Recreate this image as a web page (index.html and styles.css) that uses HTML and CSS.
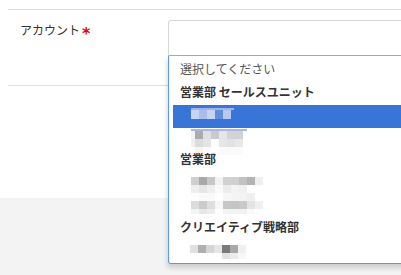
FILE: index.html
```html
<!DOCTYPE html>
<html lang="ja">
<head>
<meta charset="utf-8">
<title>アカウント</title>
<link rel="stylesheet" href="styles.css">
</head>
<body>
<div class="page">
  <div class="form">
    <div class="form-row">
      <div class="label">アカウント<span class="req">*</span></div>
      <div class="field">
        <div class="select">
          <div class="select-single"></div>
          <div class="drop">
            <ul class="results">
              <li class="opt placeholder">選択してください</li>
              <li class="opt group">営業部 セールスユニット</li>
              <li class="opt child hl">
                <div class="mosaic m-hl">
                  <div class="strip s-hl"></div>
                  <div class="cells cols5">
                    <i class="b1"></i><i class="b2"></i><i class="b1"></i><i class="b3"></i><i class="b4"></i>
                  </div>
                </div>
              </li>
              <li class="opt child">
                <div class="mosaic m-r4">
                  <div class="strip s-r4"></div>
                  <div class="cells cols-r4">
                    <i class="gf4"></i><i class="gab"></i><i class="ge0"></i><i class="gca"></i><i class="ge6"></i><i class="gd3"></i><i class="gd3"></i>
                    <i class="gf0"></i><i class="gdc"></i><i class="ge4"></i><i class="gfd"></i><i class="ge6"></i><i class="ge2"></i><i class="ge8"></i>
                    <i class="gff"></i><i class="gf5"></i><i class="gfa"></i><i class="gff"></i><i class="gfa"></i><i class="gfa"></i><i class="gfa"></i>
                  </div>
                </div>
              </li>
              <li class="opt group">営業部</li>
              <li class="opt child">
                <div class="mosaic m-r6">
                  <div class="cells cols9">
                    <i class="gcf"></i><i class="ga9"></i><i class="gc7"></i><i class="gf2"></i><i class="gd0"></i><i class="gd0"></i><i class="gc2"></i><i class="gb3"></i><i class="gef"></i>
                    <i class="gee"></i><i class="ge6"></i><i class="gef"></i><i class="gfa"></i><i class="gec"></i><i class="gf3"></i><i class="gf0"></i><i class="gff"></i><i class="gff"></i>
                    <i class="gfd"></i><i class="gfa"></i><i class="gf9"></i><i class="gff"></i><i class="gf6"></i><i class="gf4"></i><i class="gf3"></i><i class="gef"></i><i class="gff"></i>
                    <i class="gdc"></i><i class="gcb"></i><i class="gde"></i><i class="gf7"></i><i class="gc6"></i><i class="gc4"></i><i class="gc9"></i><i class="ge4"></i><i class="gf0"></i>
                    <i class="gf4 half"></i><i class="ge8 half"></i><i class="ged half"></i><i class="gff half"></i><i class="gf4 half"></i><i class="gf2 half"></i><i class="gf2 half"></i><i class="gfa half"></i><i class="gff half"></i>
                  </div>
                </div>
              </li>
              <li class="opt child"></li>
              <li class="opt group">クリエイティブ戦略部</li>
              <li class="opt child">
                <div class="mosaic m-r9">
                  <div class="cells cols7">
                    <i class="ge0"></i><i class="gb0"></i><i class="gd5"></i><i class="ge5"></i><i class="g7a"></i><i class="ga8"></i><i class="gf0"></i>
                    <i class="gff short"></i><i class="gff short"></i><i class="gff short"></i><i class="gff short"></i><i class="ge2 short"></i><i class="gec short"></i><i class="gf8 short"></i>
                  </div>
                </div>
              </li>
            </ul>
          </div>
        </div>
      </div>
    </div>
  </div>
  <div class="gap"></div>
  <div class="footer"></div>
</div>
</body>
</html>
```

FILE: styles.css
```css
html, body {
  margin: 0;
  padding: 0;
  overflow: hidden;
  background: #ffffff;
}

body {
  font-family: "Noto Sans CJK JP", "Noto Sans", sans-serif;
  font-size: 12px;
  color: #333333;
}

.page {
  padding-top: 9px;
}

.form {
  margin-left: 8px;
  border-top: 1px solid #dddddd;
  border-bottom: 1px solid #dddddd;
}

.form-row {
  display: grid;
  grid-template-columns: 160px 1fr;
  height: 75px;
}

.label {
  padding: 11px 0 0 12px;
  line-height: 18px;
  color: #333333;
  white-space: nowrap;
}

.req {
  color: #e60012;
  font-family: "DejaVu Sans", sans-serif;
  font-weight: bold;
  font-size: 16px;
  margin-left: 2px;
  vertical-align: -4px;
  line-height: 10px;
}

.field {
  padding-top: 10px;
}

.select {
  position: relative;
  width: 280px;
}

.select-single {
  height: 34px;
  border: 1px solid #d8d8d8;
  border-bottom-color: #aaaaaa;
  border-radius: 3px 3px 0 0;
  background: #ffffff;
}

.drop {
  position: absolute;
  top: 36px;
  left: 0;
  right: 0;
  background: #ffffff;
  border: 1px solid #5897fb;
  border-top: 0;
  border-radius: 0 0 3px 3px;
  box-shadow: -1px 4px 5px rgba(0, 0, 0, 0.15);
  z-index: 5;
}

.results {
  list-style: none;
  margin: 0;
  padding: 4px 0 0 4px;
}

.opt {
  height: 22.5px;
  line-height: 18px;
  padding: 0 7px;
  white-space: nowrap;
  box-sizing: border-box;
}

.placeholder {
  color: #555555;
}

.group {
  font-weight: bold;
  color: #333333;
}

.child {
  padding-left: 18px;
}

.hl {
  background: #3875d7;
}

.mosaic {
  display: flex;
  flex-direction: column;
}

.m-hl {
  padding-top: 3px;
}

.m-r4 {
  padding-top: 1.5px;
}

.m-r6 {
  padding-top: 4.5px;
}

.m-r9 {
  padding-top: 5px;
  margin-left: -1px;
}

.strip {
  height: 2px;
}

.s-hl {
  width: 43px;
  background: #9fb3ea;
}

.s-r4 {
  width: 56px;
  background: #a9b9e6;
}

.cells {
  display: grid;
  grid-auto-rows: 8px;
}

.cols5 {
  grid-template-columns: repeat(5, 8px);
  grid-auto-rows: 9px;
}

.cols-r4 {
  grid-template-columns: 4px repeat(6, 8px);
}

.cols7 {
  grid-template-columns: repeat(7, 8px);
}

.cols9 {
  grid-template-columns: repeat(9, 8px);
}

.cells i {
  display: block;
}

.cells i.half {
  height: 5px;
}

.cells i.short {
  height: 6px;
}

.b1 { background: #c6d4f2; }
.b2 { background: #abbcec; }
.b3 { background: #5f8edf; }
.b4 { background: #b8c9f0; }

.g7a { background: #7a7a7a; }
.ga8 { background: #a8a8a8; }
.ga9 { background: #a9a9a9; }
.gab { background: #ababab; }
.gb0 { background: #b0b0b0; }
.gb3 { background: #b3b3b3; }
.gc2 { background: #c2c2c2; }
.gc4 { background: #c4c4c4; }
.gc6 { background: #c6c6c6; }
.gc7 { background: #c7c7c7; }
.gc9 { background: #c9c9c9; }
.gca { background: #cacaca; }
.gcb { background: #cbcbcb; }
.gcf { background: #cfcfcf; }
.gd0 { background: #d0d0d0; }
.gd3 { background: #d3d3d3; }
.gd5 { background: #d5d5d5; }
.gdc { background: #dcdcdc; }
.gde { background: #dedede; }
.ge0 { background: #e0e0e0; }
.ge2 { background: #e2e2e2; }
.ge4 { background: #e4e4e4; }
.ge5 { background: #e5e5e5; }
.ge6 { background: #e6e6e6; }
.ge8 { background: #e8e8e8; }
.gec { background: #ececec; }
.ged { background: #ededed; }
.gee { background: #eeeeee; }
.gef { background: #efefef; }
.gf0 { background: #f0f0f0; }
.gf2 { background: #f2f2f2; }
.gf3 { background: #f3f3f3; }
.gf4 { background: #f4f4f4; }
.gf5 { background: #f5f5f5; }
.gf6 { background: #f6f6f6; }
.gf7 { background: #f7f7f7; }
.gf8 { background: #f8f8f8; }
.gf9 { background: #f9f9f9; }
.gfa { background: #fafafa; }
.gfd { background: #fdfdfd; }
.gff { background: #ffffff; }

.gap {
  height: 112px;
}

.footer {
  height: 77px;
  background: #f3f3f3;
}
```
